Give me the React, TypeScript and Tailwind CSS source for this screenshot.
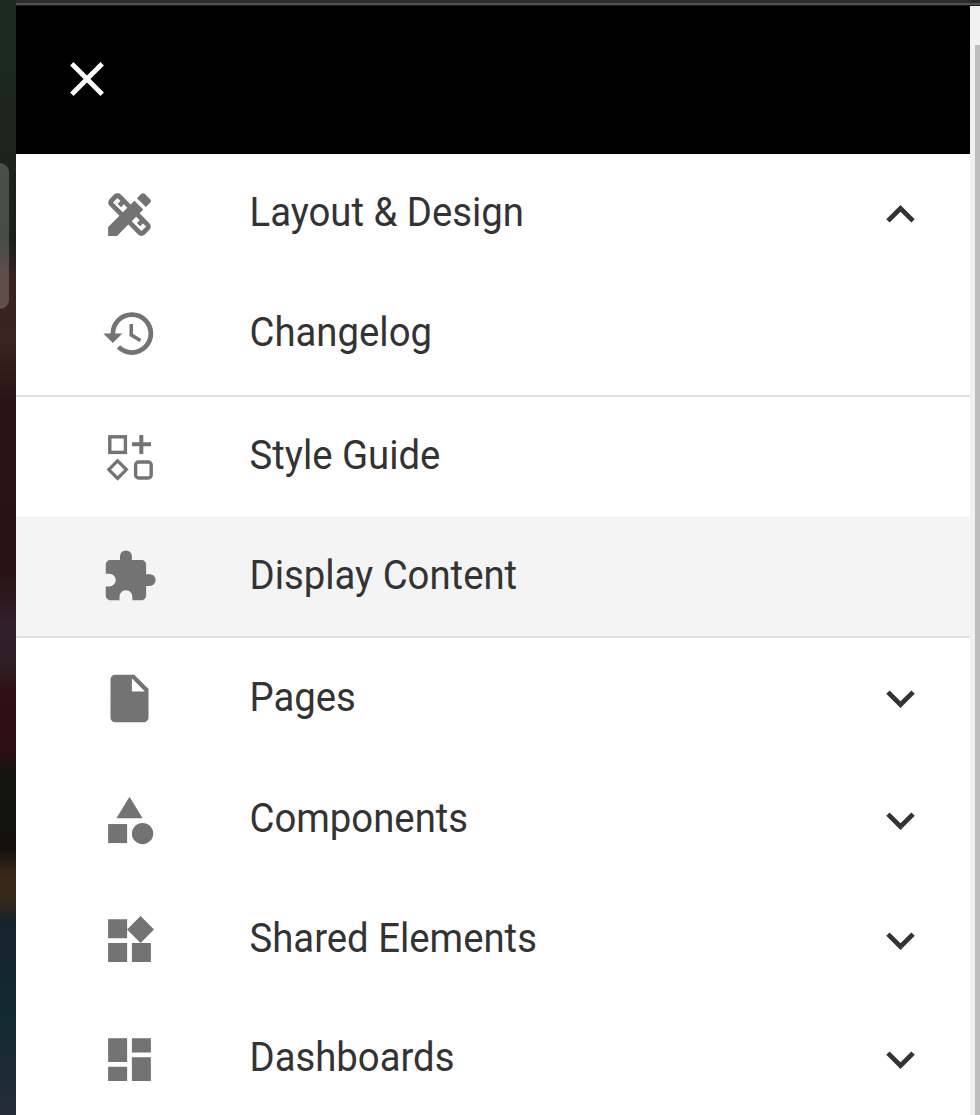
import React from "react";
import {
  MdCategory,
  MdClose,
  MdDashboard,
  MdDesignServices,
  MdExpandLess,
  MdExpandMore,
  MdExtension,
  MdHistory,
  MdInsertDriveFile,
  MdWidgets,
} from "react-icons/md";

const StyleGuideIcon = ({ className }: { className?: string }) => (
  <svg viewBox="0 0 57 57" fill="none" stroke="currentColor" strokeWidth="3.4" className={className}>
    <rect x="8.8" y="7.8" width="15.6" height="15.6" />
    <path d="M40.3 6v19M31 15.3h19" strokeWidth="4" />
    <path d="M16.6 31.8l8.8 8.8-8.8 8.8-8.8-8.8z" strokeWidth="3.2" />
    <rect x="34.6" y="33" width="15.6" height="16" rx="3" />
  </svg>
);

type ItemProps = {
  icon: React.ElementType;
  label: string;
  height: string;
  arrow?: "up" | "down";
  active?: boolean;
};

const MenuItem = ({ icon: Icon, label, height, arrow, active }: ItemProps) => {
  const Arrow = arrow === "up" ? MdExpandLess : MdExpandMore;
  return (
    <li
      className={`flex shrink-0 items-center pl-[85px] pr-[41px] cursor-pointer ${height} ${
        active ? "bg-[#f4f4f4]" : "bg-white"
      }`}
    >
      <Icon className="size-[57px] shrink-0 text-[#737373]" />
      <span className="ml-[91.5px] grow scale-y-[1.06] pb-[3.5px] text-[38.3px] leading-none whitespace-nowrap">
        {label}
      </span>
      {arrow && <Arrow className="size-[57px] shrink-0" />}
    </li>
  );
};

const Divider = () => <li className="h-[2px] shrink-0 bg-[#dfdfdf]" />;

const App = () => {
  return (
    <div className="flex h-[1115px] w-[980px] overflow-hidden bg-white font-[Roboto,sans-serif] text-[#333333]">
      {/* dimmed page behind the drawer */}
      <div className="w-4 shrink-0 bg-[linear-gradient(to_bottom,#1c2a20_0px,#1b291e_70px,#20231a_130px,#1a2118_240px,#38211f_275px,#3a2422_340px,#2a1413_400px,#281112_570px,#30202a_625px,#2e2025_665px,#310f14_690px,#2d0f12_750px,#141410_775px,#12110e_850px,#38291a_875px,#35291a_900px,#17232a_922px,#122a31_1020px,#252c36_1115px)] pt-[163px]">
        <div className="h-[146px] w-[9px] rounded-r-[9px] bg-white/20" />
      </div>

      <div className="flex min-w-0 grow flex-col">
        <div className="h-[3px] shrink-0 bg-[#2b2b2b]" />
        <div className="h-[2px] shrink-0 bg-[#515151]" />
        <div className="h-px shrink-0 bg-[#1c1c1c]" />
        <div className="flex min-h-0 grow">
          <nav className="flex w-[954px] shrink-0 flex-col">
            <div className="flex h-[148px] shrink-0 items-center bg-black pb-[2px] pl-[42px] text-white">
              <MdClose className="size-[58px]" />
            </div>
            <ul className="flex flex-col">
              <MenuItem icon={MdDesignServices} label="Layout & Design" height="h-[120px]" arrow="up" />
              <MenuItem icon={MdHistory} label="Changelog" height="h-[119px]" />
              <li className="h-[2px] shrink-0" />
              <Divider />
              <MenuItem icon={StyleGuideIcon} label="Style Guide" height="h-[120px]" />
              <MenuItem icon={MdExtension} label="Display Content" height="h-[119px]" active />
              <Divider />
              <MenuItem icon={MdInsertDriveFile} label="Pages" height="h-[121px]" arrow="down" />
              <MenuItem icon={MdCategory} label="Components" height="h-[122px]" arrow="down" />
              <MenuItem icon={MdWidgets} label="Shared Elements" height="h-[118px]" arrow="down" />
              <MenuItem icon={MdDashboard} label="Dashboards" height="h-[120px]" arrow="down" />
            </ul>
          </nav>
          {/* scrollbar */}
          <div className="grow bg-[#f1f1f1] pl-[5px] pt-[39px]">
            <div className="h-full bg-[#bdbdbd]" />
          </div>
        </div>
      </div>
    </div>
  );
};

export default App;
